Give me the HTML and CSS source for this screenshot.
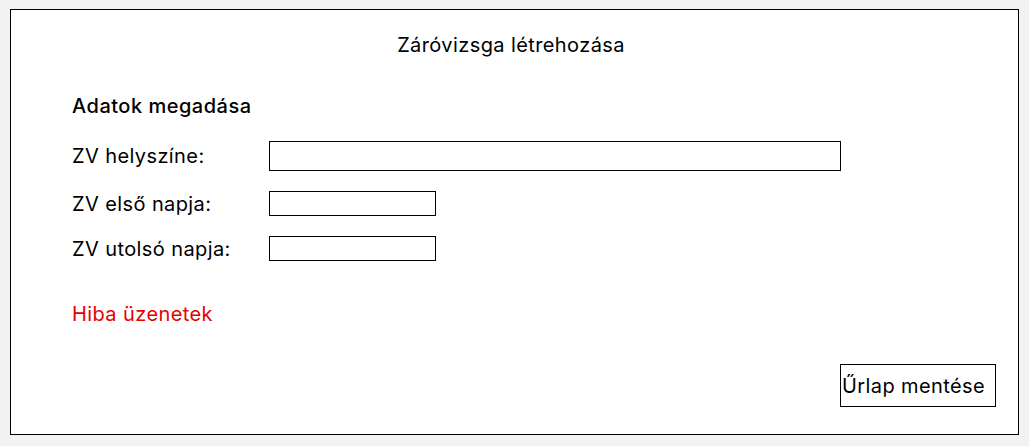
FILE: index.html
```html
<!DOCTYPE html>
<html lang="hu">
<head>
<meta charset="utf-8">
<title>Záróvizsga létrehozása</title>
<link rel="stylesheet" href="styles.css">
</head>
<body>
<div class="panel">
  <h1 class="title">Záróvizsga létrehozása</h1>
  <h2 class="section">Adatok megadása</h2>
  <div class="form">
    <div class="row">
      <label class="label">ZV helyszíne:</label>
      <div class="input input-wide"></div>
    </div>
    <div class="row">
      <label class="label">ZV első napja:</label>
      <div class="input input-short"></div>
    </div>
    <div class="row">
      <label class="label">ZV utolsó napja:</label>
      <div class="input input-short"></div>
    </div>
  </div>
  <div class="errors">Hiba üzenetek</div>
  <div class="actions">
    <button class="save">Űrlap mentése</button>
  </div>
</div>
</body>
</html>
```

FILE: styles.css
```css
html, body {
  margin: 0;
  padding: 0;
  background: #f2f2f2;
}
body {
  padding: 9px 0 0 10px;
  font-family: Inter, "Noto Sans", sans-serif;
  font-optical-sizing: none;
  letter-spacing: 0.4px;
  color: #000;
}
.panel {
  box-sizing: border-box;
  width: 1009px;
  height: 426px;
  background: #fff;
  border: 1px solid #000;
  display: flex;
  flex-direction: column;
  padding: 0 22px 27px 61px;
}
.title {
  margin: 23px -15px 0 -61px;
  font-size: 20px;
  line-height: 24px;
  font-weight: 400;
  text-align: center;
}
.section {
  margin: 37px 0 0 0;
  font-size: 20px;
  line-height: 24px;
  font-weight: 500;
  letter-spacing: 0.5px;
}
.form {
  display: flex;
  flex-direction: column;
  gap: 20px;
  margin-top: 23px;
}
.row {
  display: flex;
  align-items: center;
}
.label {
  width: 197px;
  font-size: 20px;
  line-height: 24px;
}
.input {
  box-sizing: border-box;
  border: 1px solid #000;
  background: #fff;
}
.input-wide {
  width: 572px;
  height: 30px;
}
.input-short {
  width: 167px;
  height: 25px;
}
.errors {
  margin-top: 41px;
  font-size: 20px;
  line-height: 24px;
  color: #e60000;
}
.actions {
  margin-top: auto;
  display: flex;
  justify-content: flex-end;
}
.save {
  box-sizing: border-box;
  width: 156px;
  height: 43px;
  border: 1px solid #000;
  background: #fff;
  font-family: Inter, "Noto Sans", sans-serif;
  font-optical-sizing: none;
  letter-spacing: 0.4px;
  font-size: 20px;
  line-height: 24px;
  color: #000;
  text-align: left;
  padding: 0 0 0 1px;
}
```
